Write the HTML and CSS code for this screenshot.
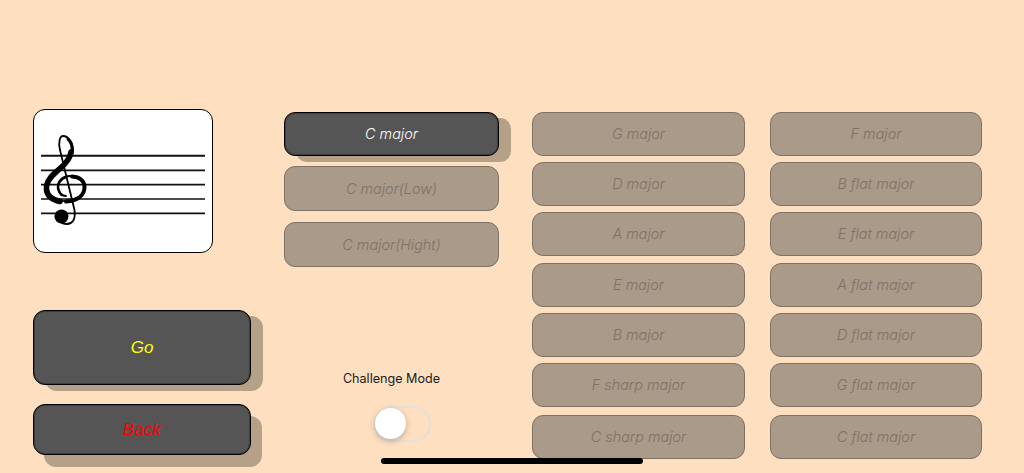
FILE: index.html
```html
<!DOCTYPE html>
<html lang="en">
<head>
<meta charset="utf-8">
<title>Key selection</title>
<link rel="stylesheet" href="styles.css">
</head>
<body>
<main class="screen">
  <section class="left">
    <div class="card">
      <svg class="staff" viewBox="34 110 178 142" aria-hidden="true">
        <g class="lines">
          <path class="line-top" d="M41 155.8H205"/>
          <path d="M41 170.3H205M41 184.7H205M41 199H205M41 213.3H205"/>
        </g>
        <g class="clef">
          <path class="thin" d="M60 150C58 142 60 136 63 136C68 136 73 142 73 150C73 160 63 166 56 172C49 178 46 184 47 190C49 198 58 202 68 201C78 200 85 195 85 187C85 180 78 176 70 176C62 176 57 182 58 188C59 193 62 196 66 196"/>
          <path class="thin" d="M60 150L74.5 210C76 220 72 224 67 224C63 224 60 222 58 220"/>
          <path class="upper" d="M68 139C71 142 72.5 146 72 151"/>
          <path class="thick" d="M71 152C70 160 63 166 56 172C49 178 45.500 184 46.500 190C47.500 196 53 200 60 201.500"/>
          <path class="mid" d="M66 201.500C78 200.500 84.500 195 84.500 187C84.500 181 80 177 72 176.500"/>
          <path class="inner" d="M66 177C60 179 57.500 184 58 188C59 192 60 194 62 195"/>
          <circle cx="61.500" cy="216.500" r="7"/>
        </g>
      </svg>
    </div>
    <button class="action go">Go</button>
    <button class="action back">Back</button>
  </section>
  <section class="middle">
    <button class="key active">C major</button>
    <button class="key tall low">C major(Low)</button>
    <button class="key tall high">C major(Hight)</button>
    <div class="challenge">Challenge Mode</div>
    <div class="toggle"><span class="knob"></span></div>
  </section>
  <section class="keys sharps">
    <button class="key">G major</button>
    <button class="key">D major</button>
    <button class="key">A major</button>
    <button class="key">E major</button>
    <button class="key">B major</button>
    <button class="key">F sharp major</button>
    <button class="key last">C sharp major</button>
  </section>
  <section class="keys flats">
    <button class="key">F major</button>
    <button class="key">B flat major</button>
    <button class="key">E flat major</button>
    <button class="key">A flat major</button>
    <button class="key">D flat major</button>
    <button class="key">G flat major</button>
    <button class="key last">C flat major</button>
  </section>
</main>
<div class="home-indicator"></div>
</body>
</html>
```
FILE: styles.css
```css
* { box-sizing: border-box; }
html, body { margin: 0; height: 473px; overflow: hidden; }
body { background: #fedfc0; position: relative; font-family: "Inter", "Liberation Sans", sans-serif; }

.screen { display: flex; align-items: flex-start; padding: 109px 0 0 33px; height: 473px; }

.left { width: 218px; display: flex; flex-direction: column; }
.card { width: 180px; height: 144px; background: #fff; border: 1px solid #000; border-radius: 12px; overflow: hidden; }
.staff { display: block; width: 178px; height: 142px; }
.lines path { fill: none; stroke: #111; stroke-width: 1.7; }
.lines .line-top { stroke-width: 2.1; }
.clef { fill: #000; }
.clef path { fill: none; stroke: #000; stroke-linecap: round; }
.clef .thin { stroke-width: 1.8; }
.clef .upper { stroke-width: 3; }
.clef .thick { stroke-width: 5.6; }
.clef .mid { stroke-width: 4; }
.clef .inner { stroke-width: 2.6; }

.action {
  display: block; width: 218px; padding: 0;
  background: #555; border: 1px solid #000; border-radius: 12px;
  font: italic 17px "Liberation Sans", Arial, sans-serif;
}
.go { height: 75px; margin-top: 57px; color: #ff0; box-shadow: inset 0 0 0 1px rgba(0,0,0,.25), 12px 6px 0 #b5a088; }
.back { height: 51px; margin-top: 19px; color: #f00; box-shadow: inset 0 0 0 1px rgba(0,0,0,.25), 11px 12px 0 #b5a088; }

.key {
  display: block; width: 100%; height: 44px; padding: 0;
  background: #a99a89; border: 1px solid #7d7163; border-radius: 11px;
  color: #7e7366; font: italic 300 14.4px/16px "Inter", "Liberation Sans", sans-serif;
}
.key.active { background: #555; border-color: #000; color: #fff; box-shadow: inset 0 0 0 1px rgba(0,0,0,.25), 12px 6px 0 #b5a088; }
.key.tall { height: 45px; }

.middle { width: 215px; margin: 3px 0 0 33px; display: flex; flex-direction: column; align-items: center; }
.low { margin-top: 10px; }
.high { margin-top: 11px; }
.challenge { margin-top: 104px; font-size: 12.6px; line-height: 16px; color: #1c1c1c; }
.toggle {
  width: 57px; height: 36px; margin: 19px 0 0 22px; padding: 0;
  border: 2px solid #e2e1dc; border-radius: 18px;
}
.knob { display: block; width: 31px; height: 31px; margin-left: -1px; border-radius: 50%; background: #fff; box-shadow: 0 2px 6px rgba(0,0,0,.25); }

.keys { margin-top: 3px; display: flex; flex-direction: column; gap: 6.2px; }
.key.last { margin-top: 1.4px; }
.sharps { width: 213px; margin-left: 33px; }
.flats { width: 212px; margin-left: 25px; }

.home-indicator { position: absolute; left: 381px; top: 458px; width: 262px; height: 6px; background: #000; border-radius: 3px; }
```
